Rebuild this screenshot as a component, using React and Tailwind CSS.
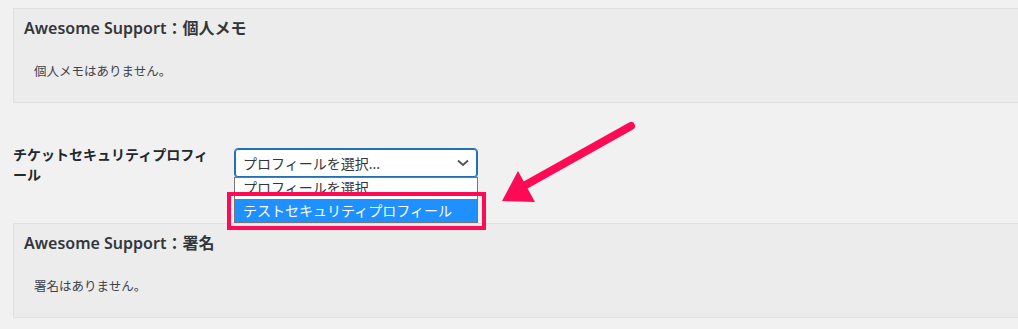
import React from 'react';

const FONT = { fontFamily: '"Noto Sans", "Noto Sans CJK JP", sans-serif' };

const Panel = ({ title, body }) => (
    <div className="h-[95px] bg-[#ececec] border border-r-0 border-[#e0e0e0] pl-[10px] pt-[9px]">
        <h2 className="text-[16px] leading-[20px] font-semibold text-[#32373c]">{title}</h2>
        <p className="mt-[24px] pl-[10px] text-[12.5px] leading-[20px] text-[#3c434a]">{body}</p>
    </div>
);

const App = () => {
    return (
        <div className="relative w-[1018px] h-[329px] overflow-hidden bg-[#f1f1f1] pt-[8px] pl-[13px]" style={FONT}>
            <Panel title="Awesome Support：個人メモ" body="個人メモはありません。" />

            {/* Profile select row */}
            <div className="h-[120px] pt-[45px] flex items-start">
                <label className="w-[200px] text-[14px] leading-[20px] font-bold text-[#23282d] -mt-[3px]">
                    チケットセキュリティプロフィール
                </label>
                <div className="relative ml-[21px] w-[244px]">
                    <div className="h-[30px] flex items-center justify-between bg-white border border-[#2271b1] rounded-[4px] pl-[8px] pr-[8px] shadow-[0_0_0_1px_#2271b1_inset]">
                        <span className="text-[14px] text-[#32373c]">プロフィールを選択...</span>
                        <svg width="12" height="8" viewBox="0 0 12 8" fill="none">
                            <path d="M1 1.5 L6 6 L11 1.5" stroke="#50575e" strokeWidth="1.8" />
                        </svg>
                    </div>
                    {/* open list */}
                    <div className="absolute left-0 top-[29px] w-[244px] bg-white border border-[#767676] z-10">
                        <div className="h-[21px] pl-[8px] text-[14px] leading-[20px] text-[#32373c]">プロフィールを選択</div>
                        <div className="h-[23px] pl-[8px] text-[14px] leading-[23px] text-white bg-[#1e90ff]">テストセキュリティプロフィール</div>
                    </div>
                    {/* highlight box */}
                    <div className="absolute left-[-7px] top-[44px] w-[259px] h-[38px] border-[4px] border-[#ff0a55] z-20"></div>
                </div>
            </div>

            <Panel title="Awesome Support：署名" body="署名はありません。" />

            {/* arrow annotation */}
            <svg className="absolute left-0 top-0 z-30" width="1018" height="329" viewBox="0 0 1018 329">
                <line x1="631" y1="126" x2="522" y2="187" stroke="#ff0a55" strokeWidth="8" strokeLinecap="round" />
                <polygon points="502,201 518,171 535,202" fill="#ff0a55" />
            </svg>
        </div>
    );
};

export default App;
